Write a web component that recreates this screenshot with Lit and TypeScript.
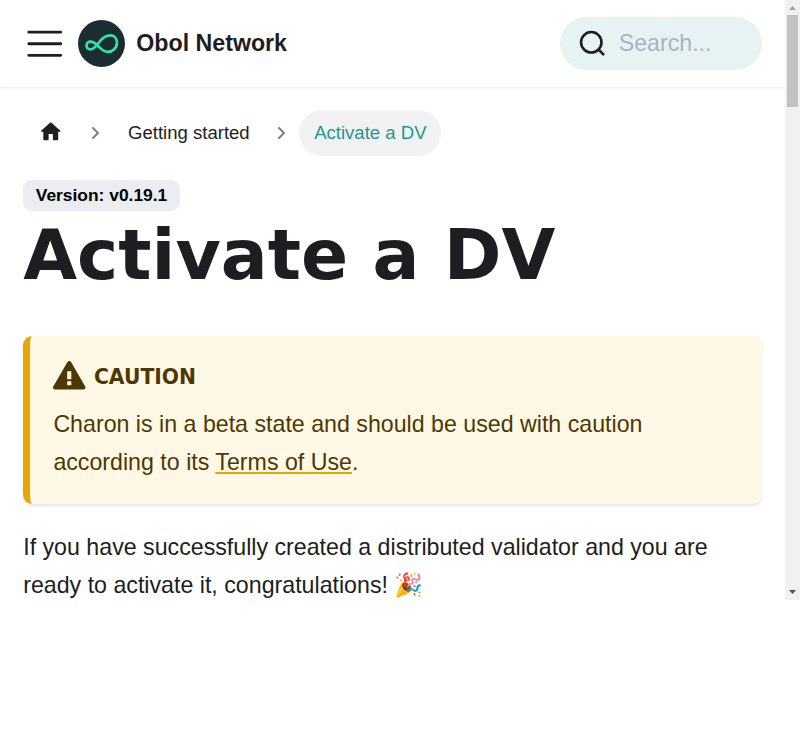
import { LitElement, html, css, svg } from "lit";
import { customElement } from "lit/decorators.js";

const chevron = html`<svg class="chevron" viewBox="0 0 256 512" aria-hidden="true">
  <path d="M246.6 278.6l-160 160C80.4 444.9 72.2 448 64 448s-16.4-3.1-22.6-9.4c-12.5-12.5-12.5-32.8 0-45.3L178.8 256 41.4 118.6c-12.5-12.5-12.5-32.8 0-45.3s32.8-12.5 45.3 0l160 160c12.4 12.5 12.4 32.8-.1 45.3z"/>
</svg>`;

const infinity = svg`<path d="M20 26C17.5 23.8 15.5 22.2 12.8 22.2C10.4 22.2 8.7 23.9 8.7 26C8.7 28.3 10.5 30 12.8 30C20 30 22 15.7 33 15.7C37 15.7 39.8 18.7 39.8 23C39.8 28.5 35.5 32.6 30.2 32.6C26 32.6 23.5 29.5 20 26z"/>`;

@customElement("app-root")
export class AppRoot extends LitElement {
  static styles = css`
    :host {
      display: flex;
      height: 600px;
      overflow: hidden;
      background: #fff;
      color: #1c1e21;
      font-family: "Liberation Sans", Arial, sans-serif;
    }
    * { box-sizing: border-box; }
    .page {
      flex: 1;
      min-width: 0;
      zoom: 1.45;
      font-size: 16px;
      line-height: 1.65;
    }
    .navbar {
      display: flex;
      align-items: center;
      height: 60px;
      padding: 8px 16px;
      box-shadow: 0 1px 2px rgba(0, 0, 0, 0.1);
    }
    .toggle {
      display: flex;
      padding: 0;
      border: 0;
      background: none;
      margin-right: 8px;
    }
    .toggle svg {
      width: 30px;
      height: 30px;
      stroke: #1c1e21;
      stroke-width: 2;
      stroke-linecap: round;
    }
    .logo { width: 32.4px; height: 32.4px; margin-right: 7.6px; }
    .logo circle { fill: #1c2d32; }
    .logo path { fill: none; stroke: #2fe4ab; stroke-width: 2.8; stroke-linejoin: round; }
    .brand { font-weight: 700; }
    .search {
      display: flex;
      align-items: center;
      width: 139.3px;
      height: 36px;
      margin-left: auto;
      padding: 0 13.2px;
      border-radius: 40px;
      background: #e7f3f3;
      color: #a9b2c8;
    }
    .search svg {
      flex: none;
      width: 18.7px;
      height: 18.7px;
      margin-right: 8.7px;
      fill: none;
      stroke: #1c1e21;
      stroke-width: 1.9;
      stroke-linecap: round;
    }
    main { padding: 16px 16px 0; }
    .crumbs {
      display: flex;
      align-items: center;
      font-size: 12.8px;
      margin-bottom: 16.6px;
    }
    .crumb { padding: 5.12px 10.24px; border-radius: 32px; }
    .crumb.home { display: flex; height: 31.36px; }
    .home svg { width: 17.6px; height: 17.6px; margin-top: 1px; fill: #1c1e21; }
    .crumb.active { background: #f2f2f2; color: #1a9a91; }
    .chevron { width: 5.5px; height: 11px; margin: 0 9.55px 0 8.95px; fill: #808080; }
    .badge {
      display: block;
      width: fit-content;
      padding: 4px 8px;
      border: 1px solid #ebedf0;
      border-radius: 6.4px;
      background: #ebedf0;
      color: #000;
      font-size: 12px;
      font-weight: 700;
      line-height: 12px;
    }
    h1 {
      margin: 0 0 26.4px;
      font: 700 48px/60px "DejaVu Sans", sans-serif;
    }
    .admonition {
      padding: 16px;
      margin-bottom: 16.3px;
      border-left: 5px solid #e6a700;
      border-radius: 6.4px;
      background: #fff8e6;
      color: #4d3800;
      box-shadow: 0 1px 2px rgba(0, 0, 0, 0.1);
    }
    .heading {
      display: flex;
      height: 26.5px;
      margin-bottom: 4.8px;
      font: 700 14px/25.3px "DejaVu Sans", sans-serif;
    }
    .heading svg { width: 22.4px; height: 22.4px; margin-right: 5.6px; fill: #4d3800; }
    p { margin: 0; }
    .terms { color: inherit; text-decoration: underline #e6a700; }
    .scrollbar {
      display: flex;
      flex-direction: column;
      align-items: center;
      justify-content: space-between;
      width: 15px;
      height: 600px;
      background: #f1f1f1;
    }
    .scrollbar svg { display: block; width: 15px; height: 15px; }
    .up { fill: #a3a3a3; }
    .down { fill: #505050; }
    .thumb { width: 11px; height: 92px; margin-bottom: auto; background: #c1c1c1; }
  `;

  render() {
    return html`
      <div class="page">
        <nav class="navbar">
          <button class="toggle" aria-label="Toggle navigation">
            <svg viewBox="0 0 30 30"><path d="M4 7h22M4 15h22M4 23h22" /></svg>
          </button>
          <svg class="logo" viewBox="0 0 48 48"><circle cx="24" cy="24" r="24" />${infinity}</svg>
          <span class="brand">Obol Network</span>
          <div class="search">
            <svg viewBox="0 0 20 20">
              <path d="M14.386 14.386l4.0877 4.0877-4.0877-4.0877c-2.9418 2.9419-7.7115 2.9419-10.6533 0-2.9419-2.9418-2.9419-7.7115 0-10.6533 2.9418-2.9419 7.7115-2.9419 10.6533 0 2.9419 2.9418 2.9419 7.7115 0 10.6533z" />
            </svg>
            <span>Search...</span>
          </div>
        </nav>
        <main>
          <div class="crumbs">
            <span class="crumb home">
              <svg viewBox="0 0 24 24">
                <path d="M10 19v-5h4v5c0 .55.45 1 1 1h3c.55 0 1-.45 1-1v-7h1.7c.46 0 .68-.57.33-.87L12.67 3.6c-.38-.34-.96-.34-1.34 0l-8.36 7.53c-.34.3-.13.87.33.87H5v7c0 .55.45 1 1 1h3c.55 0 1-.45 1-1z" />
              </svg>
            </span>
            ${chevron}
            <span class="crumb">Getting started</span>
            ${chevron}
            <span class="crumb active">Activate a DV</span>
          </div>
          <span class="badge">Version: v0.19.1</span>
          <h1>Activate a DV</h1>
          <section class="admonition">
            <div class="heading">
              <svg viewBox="0 0 16 16">
                <path fill-rule="evenodd" d="M8.893 1.5c-.183-.31-.52-.5-.887-.5s-.703.19-.886.5L.138 13.499a.98.98 0 0 0 0 1.001c.193.31.53.501.886.501h13.964c.367 0 .704-.19.877-.5a1.03 1.03 0 0 0 .01-1.002L8.893 1.5zm.133 11.497H6.987v-2.003h2.039v2.003zm0-3.004H6.987V5.987h2.039v4.006z" />
              </svg>
              <span>CAUTION</span>
            </div>
            <p>Charon is in a beta state and should be used with caution according to its <a class="terms">Terms of Use</a>.</p>
          </section>
          <p>If you have successfully created a distributed validator and you are ready to activate it, congratulations! 🎉</p>
        </main>
      </div>
      <div class="scrollbar">
        <svg class="up" viewBox="0 0 15 15"><path d="M4 10h7L7.500 6z" /></svg>
        <div class="thumb"></div>
        <svg class="down" viewBox="0 0 15 15"><path d="M4 5h7L7.500 9z" /></svg>
      </div>
    `;
  }
}
